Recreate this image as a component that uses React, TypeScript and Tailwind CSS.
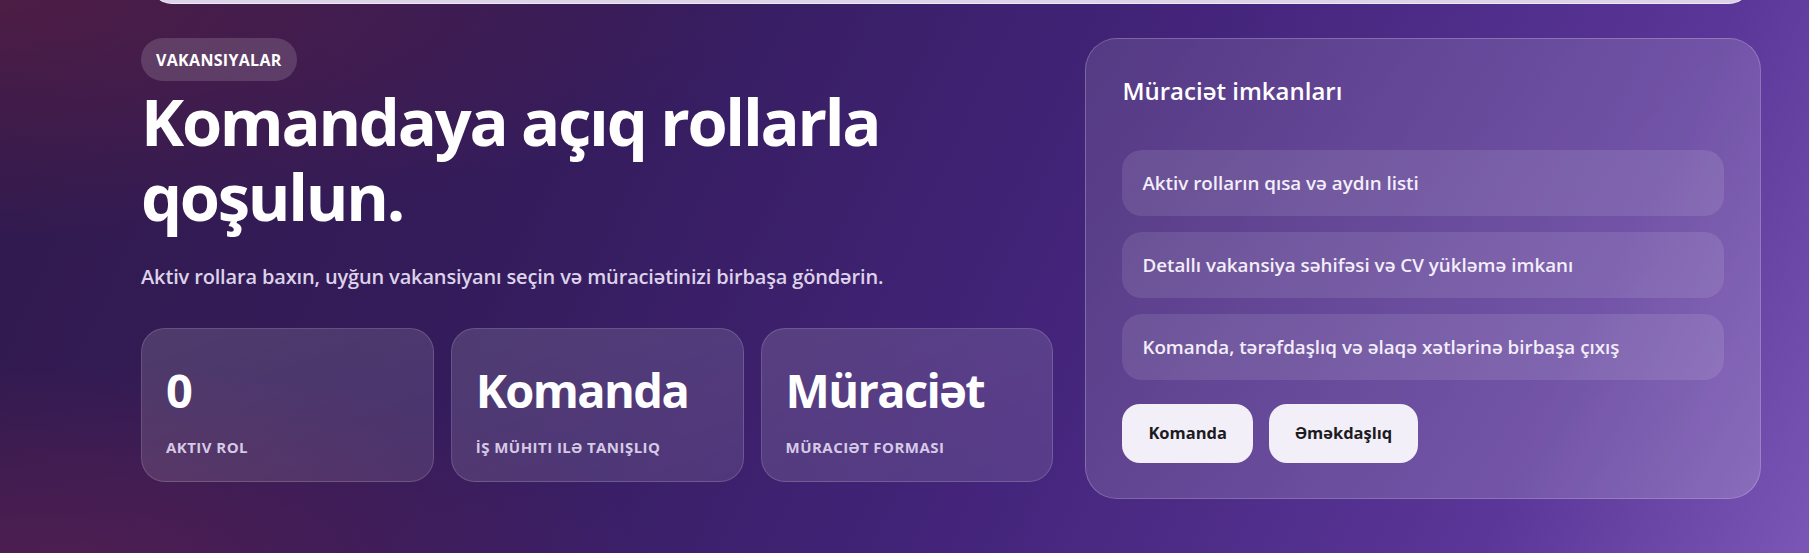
const STATS = [
  { value: '0', label: 'Aktiv rol' },
  { value: 'Komanda', label: 'İş mühiti ilə tanışlıq' },
  { value: 'Müraciət', label: 'Müraciət forması' },
];

const PERKS = [
  'Aktiv rolların qısa və aydın listi',
  'Detallı vakansiya səhifəsi və CV yükləmə imkanı',
  'Komanda, tərəfdaşlıq və əlaqə xətlərinə birbaşa çıxış',
];

export default function App() {
  return (
    <div className="relative min-h-[553px] w-full overflow-hidden font-['Open_Sans',sans-serif] text-white bg-[radial-gradient(ellipse_at_0%_0%,rgba(105,32,62,0.5),transparent_30%),radial-gradient(ellipse_at_3%_100%,rgba(110,34,76,0.45),transparent_24%),linear-gradient(115deg,#311a4c_0%,#341c5c_30%,#43247a_58%,#5a3698_84%,#7a56b6_100%)]">
      {/* bottom edge of the sticky header */}
      <div className="ml-[150px] h-[4px] w-[1601px] overflow-hidden">
        <div className="-mt-[36px] h-[40px] rounded-b-[22px] border border-white/50 bg-[#dcd3e8]" />
      </div>

      <section className="ml-[141px] mt-[34px] flex w-[1620px] items-start gap-8">
        <div className="flex w-[913px] flex-col items-start">
          <span className="inline-flex h-[43px] items-center rounded-full bg-white/15 px-[15px] text-[16px] font-bold uppercase tracking-[0.02em] text-white">
            Vakansiyalar
          </span>
          <h1 className="mt-[3px] text-[65px] font-bold leading-[75px] tracking-[-0.035em] text-white">
            Komandaya açıq rollarla qoşulun.
          </h1>
          <p className="mt-[29px] text-[20px] font-semibold leading-[28px] tracking-[-0.15px] text-[#ddd2ea]">
            Aktiv rollara baxın, uyğun vakansiyanı seçin və müraciətinizi birbaşa göndərin.
          </p>

          <div className="mt-[37px] grid w-full grid-cols-3 gap-[17px]">
            {STATS.map(s => (
              <div
                key={s.label}
                className="h-[154px] rounded-3xl border border-white/15 bg-[linear-gradient(160deg,rgba(255,255,255,0.14),rgba(255,255,255,0.1))] px-6 pt-[38px]"
              >
                <div className="text-[47px] font-bold leading-none tracking-[-0.035em] text-white">{s.value}</div>
                <div className="mt-[25px] text-[15px] font-bold uppercase leading-4 tracking-[0.03em] text-[#d6cae6]">
                  {s.label}
                </div>
              </div>
            ))}
          </div>
        </div>

        <aside className="h-[461px] w-[676px] rounded-[32px] border border-white/20 bg-[linear-gradient(135deg,rgba(255,255,255,0.11),rgba(255,255,255,0.17))] p-9">
          <h2 className="text-[24px] font-semibold leading-8 text-white">Müraciət imkanları</h2>
          <ul className="mt-[43px] flex flex-col gap-4">
            {PERKS.map(p => (
              <li
                key={p}
                className="flex h-[66px] items-center rounded-[20px] bg-white/10 px-5 text-[18.8px] font-semibold text-[#f3eef9]"
              >
                {p}
              </li>
            ))}
          </ul>
          <div className="mt-6 flex gap-4">
            <button className="h-[59px] rounded-[18px] bg-[#f3eff8] px-[26px] text-[16.5px] font-bold text-[#1c1b22]">
              Komanda
            </button>
            <button className="h-[59px] rounded-[18px] bg-[#f3eff8] px-[26px] text-[16.5px] font-bold text-[#1c1b22]">
              Əməkdaşlıq
            </button>
          </div>
        </aside>
      </section>
    </div>
  );
}
